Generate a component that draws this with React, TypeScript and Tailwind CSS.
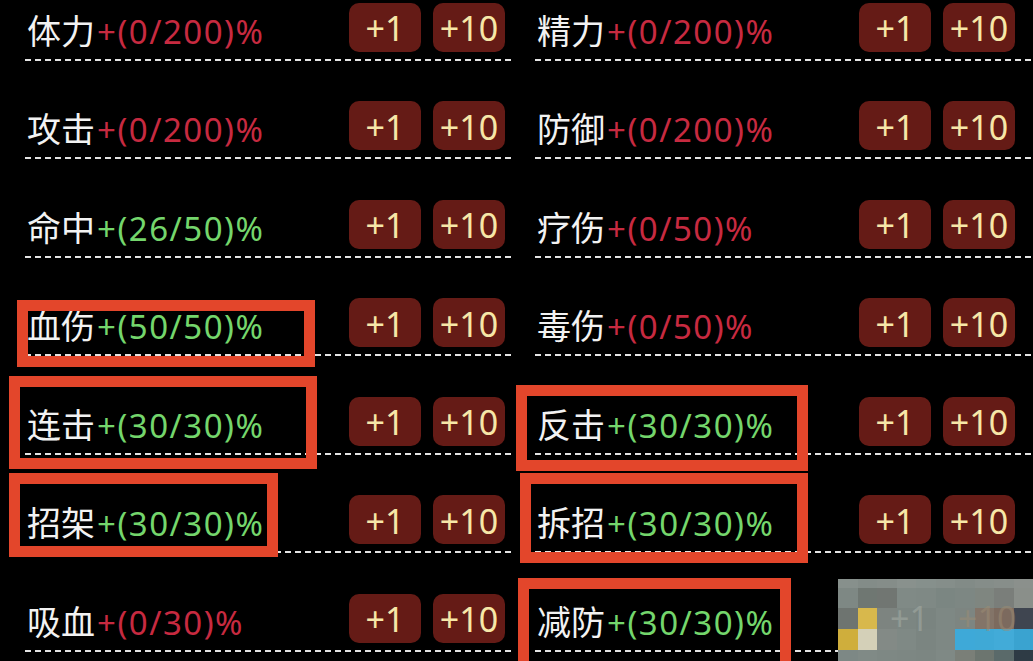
import React from "react";

type Stat = { name: string; value: string; ok: boolean; hidden?: boolean };

const left: Stat[] = [
  { name: "体力", value: "0/200", ok: false },
  { name: "攻击", value: "0/200", ok: false },
  { name: "命中", value: "26/50", ok: true },
  { name: "血伤", value: "50/50", ok: true },
  { name: "连击", value: "30/30", ok: true },
  { name: "招架", value: "30/30", ok: true },
  { name: "吸血", value: "0/30", ok: false },
];

const right: Stat[] = [
  { name: "精力", value: "0/200", ok: false },
  { name: "防御", value: "0/200", ok: false },
  { name: "疗伤", value: "0/50", ok: false },
  { name: "毒伤", value: "0/50", ok: false },
  { name: "反击", value: "30/30", ok: true },
  { name: "拆招", value: "30/30", ok: true },
  { name: "减防", value: "30/30", ok: true, hidden: true },
];

function Btn({ label }: { label: string }) {
  return (
    <div className="w-[72px] h-[49px] rounded-[10px] bg-[#651b16] text-[#f7e7a8] text-[34px] leading-none flex items-center justify-center pt-[2px] font-['Noto_Sans',sans-serif]">
      {label}
    </div>
  );
}

function Row({ s }: { s: Stat }) {
  return (
    <div className="h-[98.5px] flex flex-col justify-end">
      <div className="flex items-center h-[49px] pl-[2px] pr-[10px]">
        <div className="flex-1 flex items-baseline mt-[6px] whitespace-nowrap">
          <span className="text-[34px] leading-none text-[#f2f2f2] font-['Noto_Sans_CJK_SC',sans-serif]">
            {s.name}
          </span>
          <span
            className={
              s.ok
                ? "ml-[2px] text-[33px] leading-none text-[#74d66c] tracking-[1.5px] font-['Noto_Sans',sans-serif]"
                : "ml-[2px] text-[33px] leading-none text-[#c72a40] tracking-[1.5px] font-['Noto_Sans',sans-serif]"
            }
          >
            +({s.value})%
          </span>
        </div>
        <div className={s.hidden ? "flex gap-[12px] invisible" : "flex gap-[12px]"}>
          <Btn label="+1" />
          <Btn label="+10" />
        </div>
      </div>
      <div className="mt-[7px] h-[2px] bg-[repeating-linear-gradient(to_right,#e4e4e4_0px,#e4e4e4_6px,transparent_6px,transparent_10px)]" />
    </div>
  );
}

const mosaic: string[][] = [
  ["#87908c", "#838c88", "#858d89", "#89918d", "#86908c", "#858e8a", "#828b87", "#858d89", "#878e8a", "#8b908c"],
  ["#7e8884", "#6f7772", "#717672", "#808a86", "#7f8985", "#7b8682", "#7d8783", "#7f8680", "#7a7e7a", "#8a8f8a"],
  ["#6e7470", "#d8b84c", "#7d8480", "#7c8682", "#7a8480", "#7e8884", "#7d8581", "#837468", "#7c6a5e", "#3f4550"],
  ["#cfae3c", "#d4d0b8", "#838a86", "#7f8985", "#7b8581", "#7e8884", "#3ea9d8", "#3fa9d6", "#42abd8", "#3aa3d0"],
  ["#7d8885", "#808a86", "#7e8884", "#7d8783", "#7c8682", "#7f8985", "#7a7f78", "#6c756f", "#5a6a6a", "#2e3b45"],
];

function Mosaic() {
  const rowH = [9, 20, 21, 21, 11];
  return (
    <div className="absolute left-[838px] top-[579px] w-[195px] h-[82px] flex flex-col overflow-hidden">
      {mosaic.map((r, i) => (
        <div key={i} className="flex" style={{ height: rowH[i] }}>
          {r.map((c, j) => (
            <div key={j} className="flex-1" style={{ backgroundColor: c }} />
          ))}
        </div>
      ))}
      <div className="absolute left-[52px] top-[22px] text-[34px] leading-none text-[#a9b0a8] opacity-50 font-['Noto_Sans',sans-serif]">
        +1
      </div>
      <div className="absolute left-[120px] top-[22px] text-[34px] leading-none text-[#9c8c74] opacity-50 font-['Noto_Sans',sans-serif]">
        +10
      </div>
    </div>
  );
}

function Box({ cls }: { cls: string }) {
  return <div className={"absolute border-[11px] border-[#e3462b] " + cls} />;
}

export default function App() {
  return (
    <div className="relative w-[1033px] h-[661px] overflow-hidden bg-black">
      <div className="flex mt-[-38px]">
        <div className="ml-[25px] w-[490px] flex flex-col">
          {left.map((s) => (
            <Row key={s.name} s={s} />
          ))}
        </div>
        <div className="ml-[20px] w-[498px] flex flex-col [&>div>div:first-child]:pr-[18px]">
          {right.map((s) => (
            <Row key={s.name} s={s} />
          ))}
        </div>
      </div>

      <Box cls="left-[17px] top-[300px] w-[298px] h-[67px]" />
      <Box cls="left-[9px] top-[376px] w-[308px] h-[93px]" />
      <Box cls="left-[9px] top-[473px] w-[269px] h-[84px]" />
      <Box cls="left-[516px] top-[385px] w-[292px] h-[86px]" />
      <Box cls="left-[520px] top-[473px] w-[288px] h-[90px]" />
      <Box cls="left-[518px] top-[578px] w-[273px] h-[95px]" />

      <Mosaic />
    </div>
  );
}
